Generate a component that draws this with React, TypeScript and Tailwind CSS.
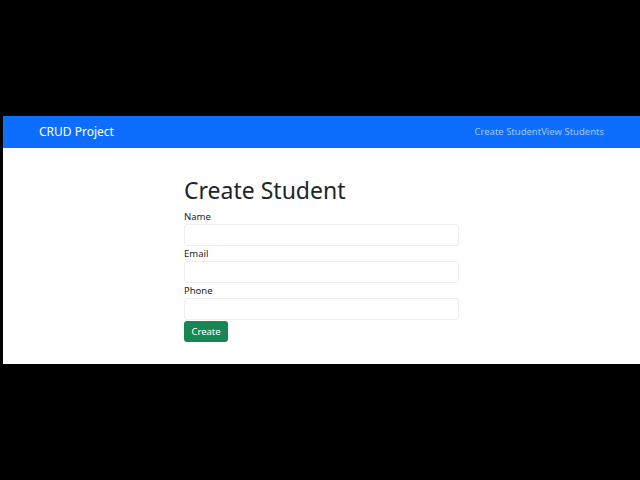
import React from 'react';

const fields = ['Name', 'Email', 'Phone'];

export default function App() {
  return (
    <div className="w-full h-[480px] bg-black flex flex-col" style={{ fontFamily: '"Noto Sans", "Open Sans", sans-serif' }}>
      <div className="h-[116px]" />
      {/* Page */}
      <div className="ml-[3px] h-[248px] bg-white flex flex-col">
        {/* Navbar */}
        <nav className="h-[32px] bg-[#0d6efd] flex items-center justify-between pl-[36px] pr-[36px]">
          <span className="text-[12px] text-white">CRUD Project</span>
          <div className="flex text-[9.5px] text-[#9ec5fe]">
            <a>Create Student</a>
            <a>View Students</a>
          </div>
        </nav>

        {/* Form */}
        <div className="pl-[181px] pt-[28px] w-[456px]">
          <h1 className="text-[23px] leading-[28px] text-[#212529]">Create Student</h1>
          <form className="flex flex-col mt-[5px]">
            {fields.map((f) => (
              <div key={f} className="flex flex-col">
                <label className="text-[9.5px] leading-[15px] text-[#212529]">{f}</label>
                <input className="h-[22px] w-[275px] border border-[#eceef0] rounded-[3px] bg-white" />
              </div>
            ))}
            <button
              type="button"
              className="mt-[1px] w-[44px] h-[21px] bg-[#198754] rounded-[3px] text-white text-[9.5px] leading-none"
            >
              Create
            </button>
          </form>
        </div>
      </div>
    </div>
  );
}
